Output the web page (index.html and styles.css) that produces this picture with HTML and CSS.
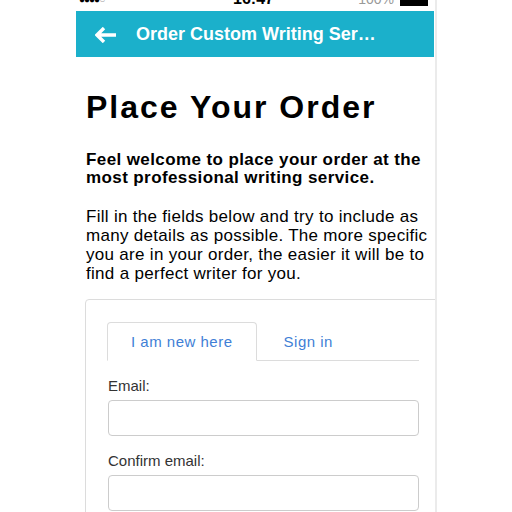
FILE: index.html
```html
<!DOCTYPE html>
<html>
<head>
<meta charset="utf-8">
<link rel="stylesheet" href="styles.css">
</head>
<body>
<div class="phone">
  <div class="status">
    <div class="status-inner">
      <span class="signal">●●●●<span class="empty">○</span></span>
      <span class="time">16:47</span>
      <span class="battery-wrap"><span class="pct">100%</span><span class="battery"></span></span>
    </div>
  </div>
  <div class="appbar">
    <svg class="back" width="22" height="16" viewBox="0 0 22 16"><path d="M2 8H21M9 1L2 8L9 15" fill="none" stroke="#fff" stroke-width="3.4" stroke-linecap="butt" stroke-linejoin="miter"/></svg>
    <span class="title">Order Custom Writing Ser…</span>
  </div>
  <div class="content">
    <h1 class="heading">Place Your Order</h1>
    <p class="lead">Feel welcome to place your order at the most professional writing service.</p>
    <p class="intro">Fill in the fields below and try to include as many details as possible. The more specific you are in your order, the easier it will be to find a perfect writer for you.</p>
    <div class="card">
      <div class="tabs">
        <div class="tab active">I am new here</div>
        <div class="tab">Sign in</div>
      </div>
      <label class="label">Email:</label>
      <div class="input"></div>
      <label class="label">Confirm email:</label>
      <div class="input"></div>
    </div>
  </div>
</div>
</body>
</html>
```
FILE: styles.css
```css
html, body {
  margin: 0;
  padding: 0;
  background: #fff;
  height: 512px;
  overflow: hidden;
}
body {
  font-family: "Liberation Sans", Arial, sans-serif;
  color: #000;
}
.phone {
  margin-left: 76px;
  width: 358px;
  height: 512px;
  border-right: 2px solid #ebebeb;
  padding-right: 1px;
  overflow: hidden;
}
.status {
  height: 11px;
  overflow: hidden;
}
.status-inner {
  display: flex;
  align-items: center;
  justify-content: space-between;
  height: 20px;
  margin-top: -11px;
  padding: 0 6px 0 3px;
}
.signal {
  font-size: 10px;
  letter-spacing: -1px;
  color: #000;
  width: 120px;
}
.signal .empty { color: #999; }
.time {
  font-weight: bold;
  font-size: 16px;
  color: #000;
}
.battery-wrap {
  width: 120px;
  display: flex;
  justify-content: flex-end;
  align-items: center;
  gap: 6px;
}
.pct {
  font-size: 14px;
  color: #999;
}
.battery {
  width: 28px;
  height: 12px;
  background: #000;
  margin-top: 2px;
}
.appbar {
  height: 46px;
  background: #1bb0cb;
  display: flex;
  align-items: center;
  padding-left: 19px;
}
.back {
  margin-top: 1px;
}
.title {
  color: #fff;
  font-weight: bold;
  font-size: 18px;
  margin-left: 19px;
}
.content {
  padding: 0 0 0 10px;
}
.heading {
  font-size: 32px;
  font-weight: bold;
  letter-spacing: 2px;
  margin: 30px 0 0;
  line-height: 40px;
}
.lead {
  font-size: 17px;
  font-weight: bold;
  letter-spacing: 0.4px;
  line-height: 18px;
  margin: 24px 0 0;
}
.intro {
  font-size: 17px;
  letter-spacing: 0.3px;
  line-height: 19px;
  margin: 20px 0 0;
}
.card {
  margin-top: 16px;
  margin-left: -1px;
  margin-right: -30px;
  border: 1px solid #dcdcdc;
  border-radius: 4px;
  padding: 22px 0 0 21px;
  height: 300px;
}
.tabs {
  display: flex;
  width: 312px;
  border-bottom: 1px solid #dcdcdc;
  height: 38px;
}
.tab {
  font-size: 15px;
  letter-spacing: 0.5px;
  white-space: nowrap;
  color: #3f7fd6;
  padding: 0 23px;
  line-height: 37px;
  margin-bottom: -1px;
  border: 1px solid transparent;
  border-radius: 4px 4px 0 0;
}
.tab.active {
  border-color: #dcdcdc;
  border-bottom-color: #fff;
  background: #fff;
}
.tab + .tab {
  padding-left: 26px;
}
.label {
  display: block;
  font-size: 15px;
  color: #333;
  margin: 16px 0 0 1px;
  line-height: 18px;
}
.input {
  width: 309px;
  height: 34px;
  border: 1px solid #ccc;
  border-radius: 4px;
  margin: 5px 0 0 1px;
}
```
